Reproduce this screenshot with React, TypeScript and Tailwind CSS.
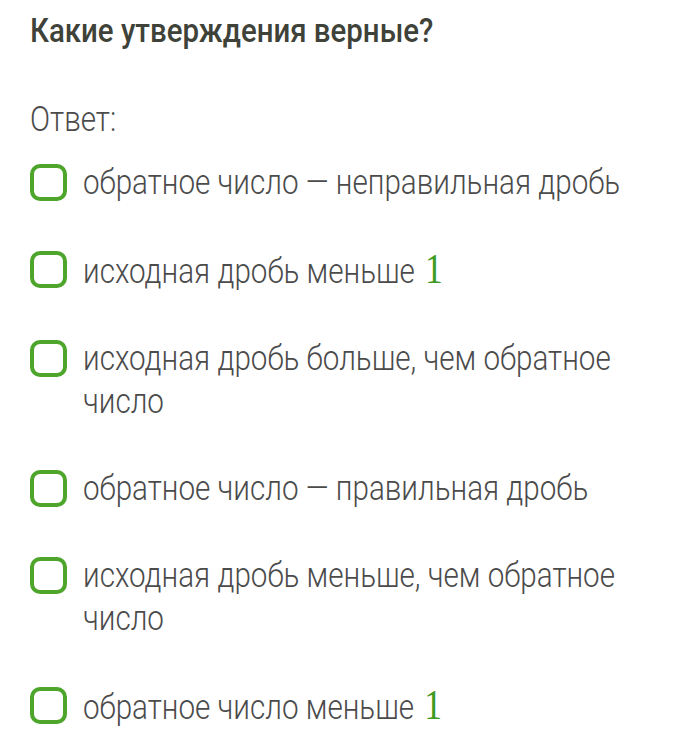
const options: { text: string; one?: boolean }[] = [
  { text: 'обратное число — неправильная дробь' },
  { text: 'исходная дробь меньше', one: true },
  { text: 'исходная дробь больше, чем обратное число' },
  { text: 'обратное число — правильная дробь' },
  { text: 'исходная дробь меньше, чем обратное число' },
  { text: 'обратное число меньше', one: true },
];

function Checkbox() {
  return (
    <span className="mt-[3px] block h-[37px] w-[37px] shrink-0 rounded-[10px] border-[4px] border-[#4ea52c] bg-white" />
  );
}

export default function App() {
  return (
    <div className="min-h-[750px] w-[700px] overflow-hidden bg-white pl-[30px] pt-[10px] font-['Roboto',sans-serif] text-[#4b4b4b]">
      {/* condensed look: Roboto squeezed horizontally */}
      <h1 className="w-[620px] origin-left scale-x-[0.865] text-[34px] font-medium leading-[40px] text-[#3e4238]">
        Какие утверждения верные?
      </h1>
      <p className="mt-[48px] w-[620px] origin-left scale-x-[0.846] text-[35px] font-light leading-[43px]">Ответ:</p>
      <div className="mt-[20px] flex flex-col gap-[44px]">
        {options.map((o, i) => (
          <label key={i} className="flex items-start gap-[16px]">
            <Checkbox />
            <span className="block w-[650px] shrink-0 origin-left scale-x-[0.846] text-[35px] font-light leading-[43px]">
              {o.text}
              {o.one && (
                <span className="ml-[12px] font-['Liberation_Serif',serif] text-[42px] leading-[43px] text-[#3e9a22]">1</span>
              )}
            </span>
          </label>
        ))}
      </div>
    </div>
  );
}
